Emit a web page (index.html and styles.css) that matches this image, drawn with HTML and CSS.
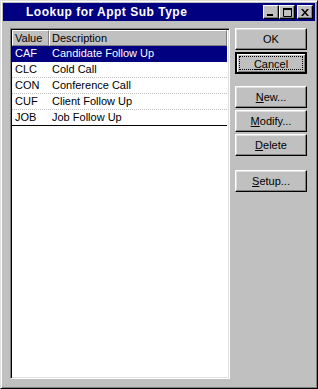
FILE: index.html
```html
<!DOCTYPE html>
<html lang="en">
<head>
    <meta charset="UTF-8">
    <title>Lookup for Appt Sub Type</title>
    <link rel="stylesheet" href="styles.css">
</head>
<body>
    <div class="window">
        <div class="titlebar">
            <span class="title">Lookup for Appt Sub Type</span>
            <div class="caption-buttons">
                <span class="cap-btn">
                    <svg width="8" height="7" viewBox="0 0 8 7"><rect x="0" y="5" width="6" height="2" fill="#000"/></svg>
                </span>
                <span class="cap-btn">
                    <svg width="9" height="9" viewBox="0 0 9 9"><path d="M0.5 1.5h8v7h-8z" fill="none" stroke="#000"/><rect x="0" y="0" width="9" height="2" fill="#000"/></svg>
                </span>
                <span class="cap-btn close">
                    <svg width="8" height="7" viewBox="0 0 8 7"><path d="M0 0h2l2 2.5 2-2.5h2l-3 3.5 3 3.5h-2l-2-2.5-2 2.5h-2l3-3.5z" fill="#000"/></svg>
                </span>
            </div>
        </div>

        <div class="content">
            <div class="list">
                <div class="list-header">
                    <div class="col-head">Value</div>
                    <div class="col-head">Description</div>
                </div>
                <div class="list-row selected"><span>CAF</span><span>Candidate Follow Up</span></div>
                <div class="list-row"><span>CLC</span><span>Cold Call</span></div>
                <div class="list-row"><span>CON</span><span>Conference Call</span></div>
                <div class="list-row"><span>CUF</span><span>Client Follow Up</span></div>
                <div class="list-row last"><span>JOB</span><span>Job Follow Up</span></div>
            </div>

            <div class="buttons">
                <button class="btn">OK</button>
                <button class="btn default"><span class="focus"><u>C</u>ancel</span></button>
                <button class="btn group"><u>N</u>ew...</button>
                <button class="btn"><u>M</u>odify...</button>
                <button class="btn"><u>D</u>elete</button>
                <button class="btn group2"><u>S</u>etup...</button>
            </div>
        </div>
    </div>
</body>
</html>
```

FILE: styles.css
```css
body {
    margin: 0;
    font-family: 'Liberation Sans', Arial, sans-serif;
    font-size: 11px;
    color: #000;
}
.window {
    width: 318px;
    height: 389px;
    box-sizing: border-box;
    background: #c0c0c0;
    border: 1px solid;
    border-color: #dfdfdf #000 #000 #dfdfdf;
    box-shadow: inset 1px 1px #fff, inset -1px -1px #808080;
    padding: 2px;
    display: flex;
    flex-direction: column;
}
.titlebar {
    height: 18px;
    background: #000080;
    color: #fff;
    display: flex;
    align-items: center;
    justify-content: space-between;
    padding: 0 2px 0 23px;
}
.title {
    font-weight: bold;
    font-size: 12px;
    letter-spacing: 0.5px;
}
.caption-buttons {
    display: flex;
    align-items: center;
}
.cap-btn {
    width: 16px;
    height: 14px;
    box-sizing: border-box;
    background: #c0c0c0;
    border: 1px solid;
    border-color: #fff #000 #000 #fff;
    box-shadow: inset -1px -1px #808080;
    display: flex;
    align-items: center;
    justify-content: center;
}
.cap-btn svg {
    display: block;
}
.cap-btn.close {
    margin-left: 2px;
}
.content {
    flex: 1;
    display: flex;
    padding: 7px 8px 7px 7px;
    gap: 5px;
}
.list {
    width: 220px;
    box-sizing: border-box;
    background: #fff;
    border: 1px solid;
    border-color: #808080 #fff #fff #808080;
    box-shadow: inset 1px 1px #000, inset -1px -1px #dfdfdf;
    padding: 1px 2px 2px 1px;
}
.list-header {
    display: grid;
    grid-template-columns: 37px 1fr;
    height: 16px;
}
.col-head {
    background: #c0c0c0;
    border: 1px solid;
    border-color: #fff #808080 #808080 #fff;
    padding-left: 2px;
    line-height: 14px;
}
.list-row {
    display: grid;
    grid-template-columns: 37px 1fr;
    height: 15px;
    line-height: 15px;
    border-bottom: 1px dotted #c0c0c0;
}
.list-row span {
    padding-left: 3px;
}
.list-row.selected {
    background: #000080;
    color: #fff;
    border-bottom-color: #000080;
}
.list-row.last {
    border-bottom: 1px solid #000;
}
.buttons {
    display: flex;
    flex-direction: column;
    gap: 2px;
    width: 72px;
}
.btn {
    height: 22px;
    box-sizing: border-box;
    background: #c0c0c0;
    font-family: inherit;
    font-size: 11px;
    color: #000;
    border: 1px solid;
    border-color: #fff #000 #000 #fff;
    box-shadow: inset -1px -1px #808080, inset 1px 1px #dfdfdf;
    padding: 0;
    margin: 0;
}
.btn.default {
    border: 2px solid #000;
    box-shadow: inset 1px 1px #fff, inset -1px -1px #808080;
    padding: 2px;
}
.focus {
    display: block;
    height: 100%;
    box-sizing: border-box;
    border: 1px dotted #000;
    line-height: 14px;
}
.btn.group {
    margin-top: 10px;
}
.btn.group2 {
    margin-top: 12px;
}
```
